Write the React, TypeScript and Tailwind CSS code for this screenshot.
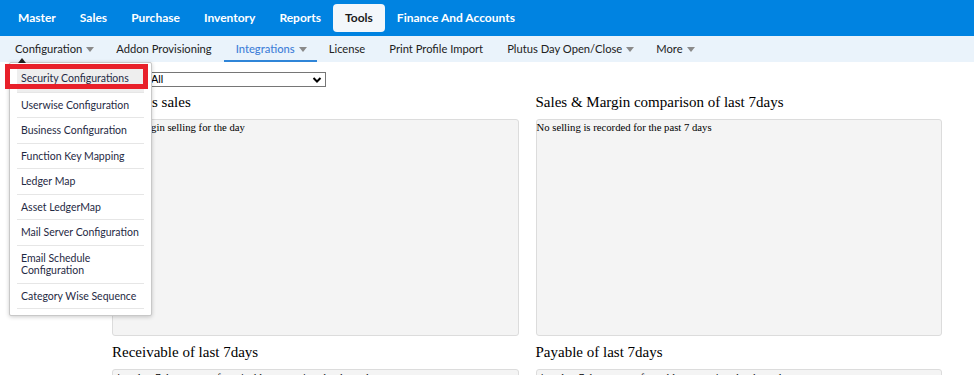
import React from 'react';

const topMenu = ['Master', 'Sales', 'Purchase', 'Inventory', 'Reports', 'Tools', 'Finance And Accounts'];

const subMenu = [
  { label: 'Configuration', caret: true },
  { label: 'Addon Provisioning' },
  { label: 'Integrations', caret: true, active: true },
  { label: 'License' },
  { label: 'Print Profile Import' },
  { label: 'Plutus Day Open/Close', caret: true },
  { label: 'More', caret: true },
];

const configItems = [
  'Security Configurations',
  'Userwise Configuration',
  'Business Configuration',
  'Function Key Mapping',
  'Ledger Map',
  'Asset LedgerMap',
  'Mail Server Configuration',
  'Email Schedule Configuration',
  'Category Wise Sequence',
];

function Caret() {
  return (
    <span className="-mr-[2px] ml-[4px] inline-block border-x-[4px] border-t-[5px] border-x-transparent border-t-[#8a8a8a] align-middle" />
  );
}

function Panel({ title, text, tall }: { title: string; text: string; tall?: boolean }) {
  return (
    <div className="flex flex-col">
      <h3 className="text-[15px] leading-[17px] text-black">{title}</h3>
      <div
        className={`mt-[8px] rounded-[3px] border border-[#dcdcdc] bg-[#f4f4f4] pt-[1px] text-[10.7px] leading-[13px] text-black ${
          tall ? 'h-[217px]' : 'h-[40px]'
        }`}
      >
        {text}
      </div>
    </div>
  );
}

export default function App() {
  return (
    <div className="relative h-[375px] w-[974px] overflow-hidden bg-white font-['Liberation_Serif',serif]">
      {/* Main menu */}
      <nav className="flex h-[36px] items-center bg-[#0083e1] pl-[6px] font-['Lato',sans-serif] text-[12px] font-bold text-white">
        {topMenu.map((m) => (
          <span
            key={m}
            className={`px-[12px] leading-[28px] ${m === 'Tools' ? 'rounded-[4px] bg-[#f3f7fb] text-[#1a1a1a]' : ''}`}
          >
            {m}
          </span>
        ))}
      </nav>

      {/* Sub menu */}
      <div className="flex h-[26px] items-stretch bg-[#eaf3fb] pl-[3px] font-['Lato',sans-serif] text-[11.2px] text-[#222]">
        {subMenu.map((s) => (
          <div
            key={s.label}
            className={`flex items-center px-[12px] ${
              s.active ? 'border-b-2 border-[#2f85d8] pt-[2px] font-medium text-[#3f7fd8]' : ''
            }`}
          >
            {s.label}
            {s.caret && <Caret />}
          </div>
        ))}
      </div>

      {/* Dashboard */}
      <div className="pl-[112px] pr-[32px]">
        <div className="mt-[10px] flex items-center">
          <span className="w-[36px] text-[12px] leading-[15px]">Outlet</span>
          <div className="flex h-[15px] w-[178px] items-center justify-between border border-[#767676] bg-white pl-[2px] pr-[3px] font-['Liberation_Sans',sans-serif] text-[11px] text-black">
            <span>All</span>
            <svg width="10" height="8" viewBox="0 0 10 8">
              <path d="M1.5 2 L5 5.5 L8.5 2" stroke="black" strokeWidth="2" fill="none" />
            </svg>
          </div>
        </div>

        <div className="mt-[7px] grid grid-cols-2 gap-x-[17px]">
          <Panel title="Today's sales" text="Yet to begin selling for the day" tall />
          <Panel title="Sales & Margin comparison of last 7days" text="No selling is recorded for the past 7 days" tall />
        </div>
        <div className="mt-[8px] grid grid-cols-2 gap-x-[17px]">
          <Panel title="Receivable of last 7days" text="since last 7 days, none of receivable transactions has been done" />
          <Panel title="Payable of last 7days" text="since last 7 days, none of payable transactions has been done" />
        </div>
      </div>

      {/* Configuration dropdown */}
      <div className="absolute left-[9px] top-[62px] w-[143px] rounded-[2px] border border-[#c8c8c8] bg-white px-[7px] pb-[6px] pt-[4px] font-['Lato',sans-serif] text-[10.5px] leading-[12.5px] text-[#1f2a44] shadow-[0_1px_4px_rgba(0,0,0,0.2)]">
        <span className="absolute -top-[5px] left-[8px] border-x-[4px] border-b-[5px] border-x-transparent border-b-[#222]" />
        {configItems.map((c, i) => (
          <div
            key={c}
            className={`relative whitespace-nowrap border-b border-[#e6e6e6] px-[4px] ${
              i === 0 ? 'bg-[#eeeeee] pb-[7px] pt-[5px]' : 'py-[6px]'
            }`}
          >
            {c === 'Email Schedule Configuration' ? (
              <>
                Email Schedule
                <br />
                Configuration
              </>
            ) : (
              c
            )}
            {i === 0 && (
              <span className="absolute -left-[12px] -right-[4px] -top-[3px] bottom-[3px] border-[5px] border-[#e8202a]" />
            )}
          </div>
        ))}
      </div>
    </div>
  );
}
